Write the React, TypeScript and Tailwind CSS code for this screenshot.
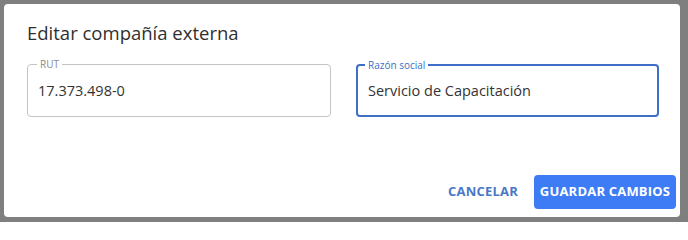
import React from "react";

const font = { fontFamily: '"Open Sans", "Noto Sans", sans-serif' };

interface OutlinedFieldProps {
  label: string;
  value: string;
  focused?: boolean;
  className?: string;
}

function OutlinedField({ label, value, focused, className }: OutlinedFieldProps) {
  return (
    <div
      className={`relative flex h-[53px] items-center rounded-[4px] px-[10px] ${
        focused ? "border-2 border-[#3d6fc6]" : "border border-[#c4c4c4]"
      } ${className ?? ""}`}
    >
      <span
        className={`absolute top-[-8px] bg-white px-[3px] text-[10px] leading-[14px] ${
          focused ? "left-[7px] text-[#3d6fc6]" : "left-[9px] text-[#8a8a8a]"
        }`}
      >
        {label}
      </span>
      <span className="text-[14.5px] text-[#333333]">{value}</span>
    </div>
  );
}

export default function App() {
  return (
    <div className="h-[222px] w-[688px] overflow-hidden bg-[#7f7f7f] pl-1 pt-1" style={font}>
      <div className="flex h-[213px] w-[676px] flex-col rounded-[4px] bg-white">
        <h2 className="pl-[23px] pt-[15px] text-[18.5px] leading-[28px] text-[#2f2f2f]">
          Editar compañía externa
        </h2>
        <div className="mt-[17px] flex gap-[25px] pl-[23px]">
          <OutlinedField className="w-[304px]" label="RUT" value="17.373.498-0" />
          <OutlinedField className="w-[303px]" label="Razón social" value="Servicio de Capacitación" focused />
        </div>
        <div className="mt-auto flex items-center justify-end gap-2 pb-2 pr-[4px]">
          <button className="h-[34px] rounded-[4px] px-2 text-[13px] font-bold tracking-[0.2px] text-[#4a78c8]">
            CANCELAR
          </button>
          <button className="h-[34px] w-[142px] rounded-[4px] bg-[#3d7cf5] text-[13px] font-bold tracking-[0.2px] text-white">
            GUARDAR CAMBIOS
          </button>
        </div>
      </div>
    </div>
  );
}
